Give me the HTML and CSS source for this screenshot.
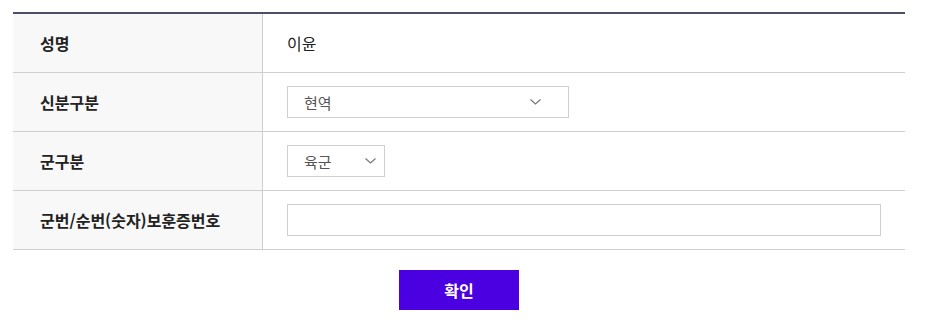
FILE: index.html
```html
<!DOCTYPE html>
<html lang="ko">
<head>
<meta charset="UTF-8">
<title>보훈 정보 확인</title>
<link rel="stylesheet" href="styles.css">
</head>
<body>
<div class="wrap">
	<div class="form-table">
		<div class="row">
			<div class="th">성명</div>
			<div class="td">이윤</div>
		</div>
		<div class="row">
			<div class="th">신분구분</div>
			<div class="td">
				<span class="sel sel-wide">
					<select>
						<option>현역</option>
					</select>
					<svg class="arrow" width="11" height="6" viewBox="0 0 11 6"><path d="M0.5 0.5 L5.5 5 L10.5 0.5" fill="none" stroke="#777" stroke-width="1.2"/></svg>
				</span>
			</div>
		</div>
		<div class="row">
			<div class="th">군구분</div>
			<div class="td">
				<span class="sel sel-small">
					<select>
						<option>육군</option>
					</select>
					<svg class="arrow" width="11" height="6" viewBox="0 0 11 6"><path d="M0.5 0.5 L5.5 5 L10.5 0.5" fill="none" stroke="#777" stroke-width="1.2"/></svg>
				</span>
			</div>
		</div>
		<div class="row">
			<div class="th">군번/순번(숫자)보훈증번호</div>
			<div class="td"><input type="text" class="txt"></div>
		</div>
	</div>
	<div class="btns">
		<button type="button" class="btn-ok">확인</button>
	</div>
</div>
</body>
</html>
```

FILE: styles.css
```css
html,body,div,span { margin:0; padding:0; }
body { font-family:"Noto Sans CJK KR", "Noto Sans", sans-serif; color:#222; background:#fff; }

.wrap { width:892px; padding:12px 0 0 13px; }

.form-table { border-top:2px solid #4a4e66; }
.row { display:flex; height:58px; border-bottom:1px solid #cfcfcf; }
.th { width:222px; flex:none; padding-left:27px; background:#f8f8f8; border-right:1px solid #cfcfcf; display:flex; align-items:center; font-size:16px; font-weight:700; color:#222; }
.td { flex:1; padding-left:24px; display:flex; align-items:center; font-size:16px; color:#222; }

.sel { position:relative; display:inline-block; }
.sel select { -webkit-appearance:none; appearance:none; height:32px; border:1px solid #cfcfcf; background:#fff; padding:0 0 0 16px; font-family:inherit; font-size:15px; color:#555; border-radius:0; outline:none; }
.sel-wide select { width:282px; }
.sel-small select { width:98px; }
.sel .arrow { position:absolute; top:13px; pointer-events:none; }
.sel-wide .arrow { right:28px; }
.sel-small .arrow { right:9px; }

.txt { width:594px; height:32px; box-sizing:border-box; border:1px solid #cfcfcf; padding:0 10px; font-family:inherit; font-size:15px; outline:none; }

.btns { display:flex; justify-content:center; padding-top:20px; }
.btn-ok { width:120px; height:40px; border:0; background:#4a00e0; color:#fff; font-family:inherit; font-size:16px; font-weight:700; cursor:pointer; }
```
